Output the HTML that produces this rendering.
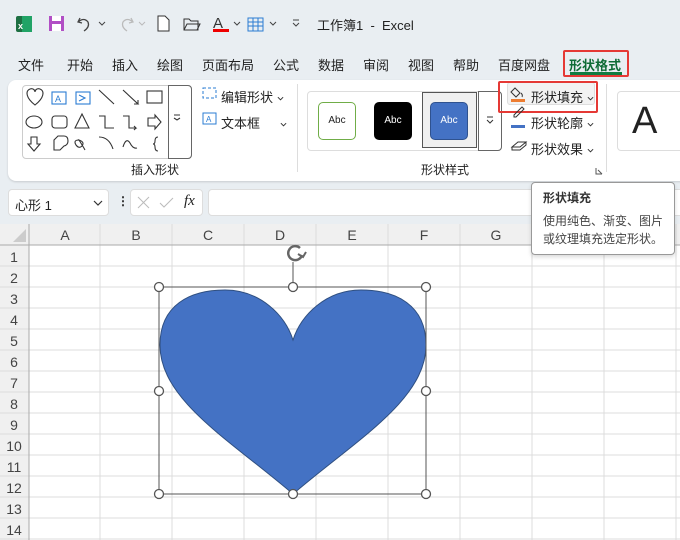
<!DOCTYPE html>
<html><head><meta charset="utf-8"><style>
*{margin:0;padding:0;box-sizing:border-box}
body{width:680px;height:540px;overflow:hidden;background:#e9eef2;font-family:"Liberation Sans","Noto Sans CJK SC",sans-serif;position:relative;color:#222}
.a{position:absolute;white-space:nowrap}
.t{font-size:13px}
.cv{display:inline-block;width:7px;height:5px;margin-left:4px;vertical-align:middle;background:none;border:none}
</style></head><body>
<svg width="0" height="0" style="position:absolute"><defs><symbol id="cv" viewBox="0 0 8 5"><path d="M1 1l3 3 3-3" fill="none" stroke="#333" stroke-width="1.1"/></symbol></defs></svg>
<svg class="a" style="left:0;top:0" width="680" height="50">
<rect x="16" y="16" width="16" height="16" rx="2" fill="#1d6f42"/><rect x="22" y="16" width="10" height="16" fill="#21a366"/><text x="18" y="29" font-size="9" fill="#fff" font-weight="bold" font-family="Liberation Sans">x</text>
<rect x="49" y="16" width="15" height="15" fill="#b14fc5"/><rect x="52" y="16" width="9" height="5" fill="#fff"/><rect x="52" y="24" width="9" height="7" fill="#fff"/>
<path d="M80 18 l-2 4 4 1 M78 22 q6-5 10 0 q2 5 -4 9" stroke="#444" stroke-width="1.3" fill="none"/>
<path d="M99 22 l3 3 3-3" stroke="#444" fill="none"/>
<path d="M131 18 l2 4 -4 1 M133 22 q-6-5 -10 0 q-2 5 4 9" stroke="#bbb" stroke-width="1.3" fill="none"/>
<path d="M139 22 l3 3 3-3" stroke="#bbb" fill="none"/>
<path d="M158 16 h7 l4 4 v11 h-11z" stroke="#333" fill="#fff"/>
<path d="M184 19 h5 l2 2 h7 v9 h-14z M184 30 l3-6 h13 l-3 6" stroke="#333" fill="none"/>
<text x="213" y="28" font-size="15" fill="#333">A</text><rect x="213" y="29" width="16" height="3" fill="#e00"/>
<path d="M234 22 l3 3 3-3" stroke="#444" fill="none"/>
<rect x="248" y="18" width="15" height="13" fill="none" stroke="#2b7cd3"/><path d="M248 22h15M248 26h15M253 18v13M258 18v13" stroke="#2b7cd3"/>
<path d="M270 22 l3 3 3-3" stroke="#444" fill="none"/>
<path d="M293 20h6M293 23l3 3 3-3" stroke="#444" fill="none"/>
</svg>
<div class="a t" style="left:317px;top:15px">工作簿1 &nbsp;-&nbsp; Excel</div>
<div class="a t" style="left:18px;top:55px">文件</div>
<div class="a t" style="left:67px;top:55px">开始</div>
<div class="a t" style="left:112px;top:55px">插入</div>
<div class="a t" style="left:157px;top:55px">绘图</div>
<div class="a t" style="left:202px;top:55px">页面布局</div>
<div class="a t" style="left:273px;top:55px">公式</div>
<div class="a t" style="left:318px;top:55px">数据</div>
<div class="a t" style="left:363px;top:55px">审阅</div>
<div class="a t" style="left:408px;top:55px">视图</div>
<div class="a t" style="left:453px;top:55px">帮助</div>
<div class="a t" style="left:498px;top:55px">百度网盘</div>
<div class="a" style="left:563px;top:50px;width:66px;height:27px;border:2px solid #e53935;border-radius:2px"></div>
<div class="a t" style="left:569px;top:55px;color:#0e6b35;font-weight:bold">形状格式</div>
<div class="a" style="left:570px;top:72px;width:52px;height:3px;background:#107c41"></div>
<div class="a" style="left:8px;top:80px;width:690px;height:101px;background:#fff;border-radius:8px;box-shadow:0 1px 2px rgba(0,0,0,.15)"></div>
<div class="a" style="left:22px;top:85px;width:170px;height:74px;border:1px solid #ccc;border-radius:4px"></div>
<div class="a" style="left:168px;top:85px;width:24px;height:74px;border:1px solid #666;border-radius:0 4px 4px 0"></div>
<svg class="a" style="left:22px;top:85px" width="170" height="74" fill="none" stroke="#333" stroke-width="1.1">
<path d="M13 20 C4 13 3 6 8 4 C11 3 13 5 13 7 C13 5 15 3 18 4 C23 6 22 13 13 20z"/>
<rect x="30" y="7" width="14" height="12" stroke="#2b7cd3"/><text x="33" y="17" font-size="9" fill="#2b7cd3" stroke="none">A</text>
<rect x="54" y="7" width="14" height="12" stroke="#2b7cd3"/><path d="M57 10l6 3-6 3" stroke="#2b7cd3"/>
<path d="M77 5l15 14M101 5l15 14l-4 0m4 0l0-4"/><rect x="125" y="6" width="15" height="12"/>
<ellipse cx="12" cy="37" rx="8" ry="6"/><rect x="30" y="31" width="15" height="12" rx="3"/><path d="M60 29l-7 14h14z"/>
<path d="M77 31h6v12h9M101 31h6v12h7l-2-2m2 2l-2 2"/><path d="M126 33h7v-3l6 7-6 7v-3h-7z"/>
<path d="M9 52h6v7h3l-6 7-6-7h3z"/><path d="M32 55l4-4h6q4 0 4 5 0 4-4 5l-4 4h-6z"/>
<path d="M57 55q-6 0 -3 5 3 4 6 1 3-4-3-6q5 8 6 10" /><path d="M77 52q10 0 14 12M101 62q3-10 7-4 3 6 7 5"/><path d="M136 52q-3 0-3 4 0 3-2 3 2 0 2 3 0 4 3 4"/>
<path d="M152 33l3 2 3-2M152 30h6"/>
</svg>
<svg class="a" style="left:200px;top:85px" width="20" height="40" fill="none" stroke="#2b7cd3"><rect x="3" y="3" width="13" height="10" stroke-dasharray="3 2"/><rect x="3" y="28" width="13" height="11"/><text x="6" y="37" font-size="8" fill="#2b7cd3" stroke="none">A</text></svg>
<div class="a t" style="left:221px;top:87px">编辑形状<svg class="cv"><use href="#cv"/></svg></div>
<div class="a t" style="left:221px;top:113px">文本框<svg class="cv" style="margin-left:20px"><use href="#cv"/></svg></div>
<div class="a" style="left:131px;top:161px;font-size:12px">插入形状</div>
<div class="a" style="left:297px;top:84px;width:1px;height:88px;background:#ddd"></div>
<div class="a" style="left:307px;top:91px;width:195px;height:60px;border:1px solid #ddd;border-radius:4px"></div>
<div class="a" style="left:478px;top:91px;width:24px;height:60px;border:1px solid #666;border-radius:0 4px 4px 0"></div>
<svg class="a" style="left:485px;top:115px" width="10" height="10" fill="none" stroke="#333"><path d="M2 2h6M2 5l3 3 3-3"/></svg>
<div class="a" style="left:422px;top:92px;width:55px;height:56px;border:1px solid #555;background:#f0f0f0"></div>
<div class="a" style="left:318px;top:102px;width:38px;height:38px;border:1px solid #70ad47;border-radius:5px;font-size:10px;text-align:center;line-height:36px">Abc</div>
<div class="a" style="left:374px;top:102px;width:38px;height:38px;background:#000;color:#fff;border-radius:5px;font-size:10px;text-align:center;line-height:38px">Abc</div>
<div class="a" style="left:430px;top:102px;width:38px;height:38px;background:#4472c4;border:1px solid #2f528f;color:#fff;border-radius:5px;font-size:10px;text-align:center;line-height:36px">Abc</div>
<div class="a" style="left:421px;top:161px;font-size:12px">形状样式</div>
<svg class="a" style="left:595px;top:167px" width="8" height="8" fill="none" stroke="#555"><path d="M1 1v6h6M3 3l4 4"/></svg>
<div class="a" style="left:507px;top:82px;width:88px;height:23px;background:#f2f2f2;border:1px solid #ddd;border-radius:3px"></div>
<div class="a" style="left:498px;top:81px;width:100px;height:32px;border:2px solid #e53935;border-radius:2px"></div>
<svg class="a" style="left:509px;top:85px" width="20" height="80" fill="none" stroke="#333"><path d="M6 3l5 5-4 4-5-5z M12 8q2 2 1 4"/><rect x="2" y="14" width="14" height="3" fill="#ed7d31" stroke="none"/><path d="M5 30l8-8 2 2-8 8h-2z"/><rect x="2" y="40" width="14" height="3" fill="#4472c4" stroke="none"/><path d="M3 62l6-5h8l-6 5z M3 62v3h8l6-5v-3"/></svg>
<div class="a t" style="left:531px;top:87px">形状填充<svg class="cv"><use href="#cv"/></svg></div>
<div class="a t" style="left:531px;top:113px">形状轮廓<svg class="cv"><use href="#cv"/></svg></div>
<div class="a t" style="left:531px;top:139px">形状效果<svg class="cv"><use href="#cv"/></svg></div>
<div class="a" style="left:606px;top:84px;width:1px;height:88px;background:#ddd"></div>
<div class="a" style="left:617px;top:91px;width:80px;height:60px;border:1px solid #ddd;border-radius:4px"></div>
<div class="a" style="left:632px;top:100px;font-size:38px">A</div>
<div class="a" style="left:8px;top:189px;width:101px;height:27px;background:#fff;border:1px solid #ddd;border-radius:4px"></div>
<div class="a t" style="left:15px;top:195px">心形 1</div>
<svg class="a" style="left:93px;top:200px" width="10" height="7"><path d="M1 1l4 4 4-4" fill="none" stroke="#333" stroke-width="1.2"/></svg>
<div class="a" style="left:117px;top:194px;font-size:12px;font-weight:bold">⋮</div>
<div class="a" style="left:130px;top:189px;width:73px;height:27px;background:#fff;border:1px solid #ddd;border-radius:4px"></div>
<svg class="a" style="left:136px;top:195px" width="70" height="16" stroke="#bbb" fill="none"><path d="M2 2l11 11M13 2L2 13M24 8l4 4 9-9"/></svg>
<div class="a" style="left:184px;top:193px;font-family:'Liberation Serif',serif;font-style:italic;font-size:15px">fx</div>
<div class="a" style="left:208px;top:189px;width:490px;height:27px;background:#fff;border:1px solid #ddd;border-radius:4px"></div>
<svg class="a" style="left:0;top:224px" width="680" height="316" font-family="Liberation Sans" font-size="14" fill="#444">
<rect width="680" height="316" fill="#fff"/>
<rect width="680" height="21" fill="#f0f0f0"/><rect width="29" height="316" fill="#f0f0f0"/>
<path d="M26 5v13h-13z" fill="#ccc"/>
<g stroke="#dcdcdc">
<path d="M100 0v316M172 0v316M244 0v316M316 0v316M388 0v316M460 0v316M532 0v316M604 0v316M676 0v316"/>
<path d="M0 42h680M0 63h680M0 84h680M0 105h680M0 126h680M0 147h680M0 168h680M0 189h680M0 210h680M0 231h680M0 252h680M0 273h680M0 294h680M0 315h680"/>
</g>
<path d="M0 21h680M29 0v316" stroke="#aaa"/>
<g text-anchor="middle"><text x="65" y="16">A</text><text x="136" y="16">B</text><text x="208" y="16">C</text><text x="280" y="16">D</text><text x="352" y="16">E</text><text x="424" y="16">F</text><text x="496" y="16">G</text><text x="568" y="16">H</text></g>
<g text-anchor="middle"><text x="14" y="38">1</text><text x="14" y="59">2</text><text x="14" y="80">3</text><text x="14" y="101">4</text><text x="14" y="122">5</text><text x="14" y="143">6</text><text x="14" y="164">7</text><text x="14" y="185">8</text><text x="14" y="206">9</text><text x="14" y="227">10</text><text x="14" y="248">11</text><text x="14" y="269">12</text><text x="14" y="290">13</text><text x="14" y="311">14</text></g>
</svg>
<svg class="a" style="left:0;top:0" width="680" height="540">
<path d="M293 494 C230 440 160 400 160 345 C160 305 190 290 225 290 C260 290 285 315 293 340 C301 315 326 290 361 290 C396 290 426 305 426 345 C426 400 356 440 293 494Z" fill="#4472c4" stroke="#2f4f80" stroke-width="1"/>
<rect x="159" y="287" width="267" height="207" fill="none" stroke="#555" stroke-width="1"/>
<path d="M293 262v25" stroke="#555"/>
<g fill="#fff" stroke="#555" stroke-width="1.3">
<circle cx="159" cy="287" r="4.5"/><circle cx="293" cy="287" r="4.5"/><circle cx="426" cy="287" r="4.5"/>
<circle cx="159" cy="391" r="4.5"/><circle cx="426" cy="391" r="4.5"/>
<circle cx="159" cy="494" r="4.5"/><circle cx="293" cy="494" r="4.5"/><circle cx="426" cy="494" r="4.5"/></g>
<path d="M300 248 a7 7 0 1 0 2 7" fill="none" stroke="#666" stroke-width="2.5"/><path d="M298 254l5 3 3-5" fill="none" stroke="#666" stroke-width="2"/>
</svg>
<div class="a" style="left:531px;top:182px;width:144px;height:73px;background:#fff;border:1px solid #999;border-radius:4px;box-shadow:0 2px 4px rgba(0,0,0,.15)"></div>
<div class="a" style="left:543px;top:189px;font-size:12px;font-weight:bold;color:#333">形状填充</div>
<div class="a" style="left:543px;top:212px;font-size:12px;color:#444;line-height:18px">使用纯色、渐变、图片<br>或纹理填充选定形状。</div>
</body></html>
